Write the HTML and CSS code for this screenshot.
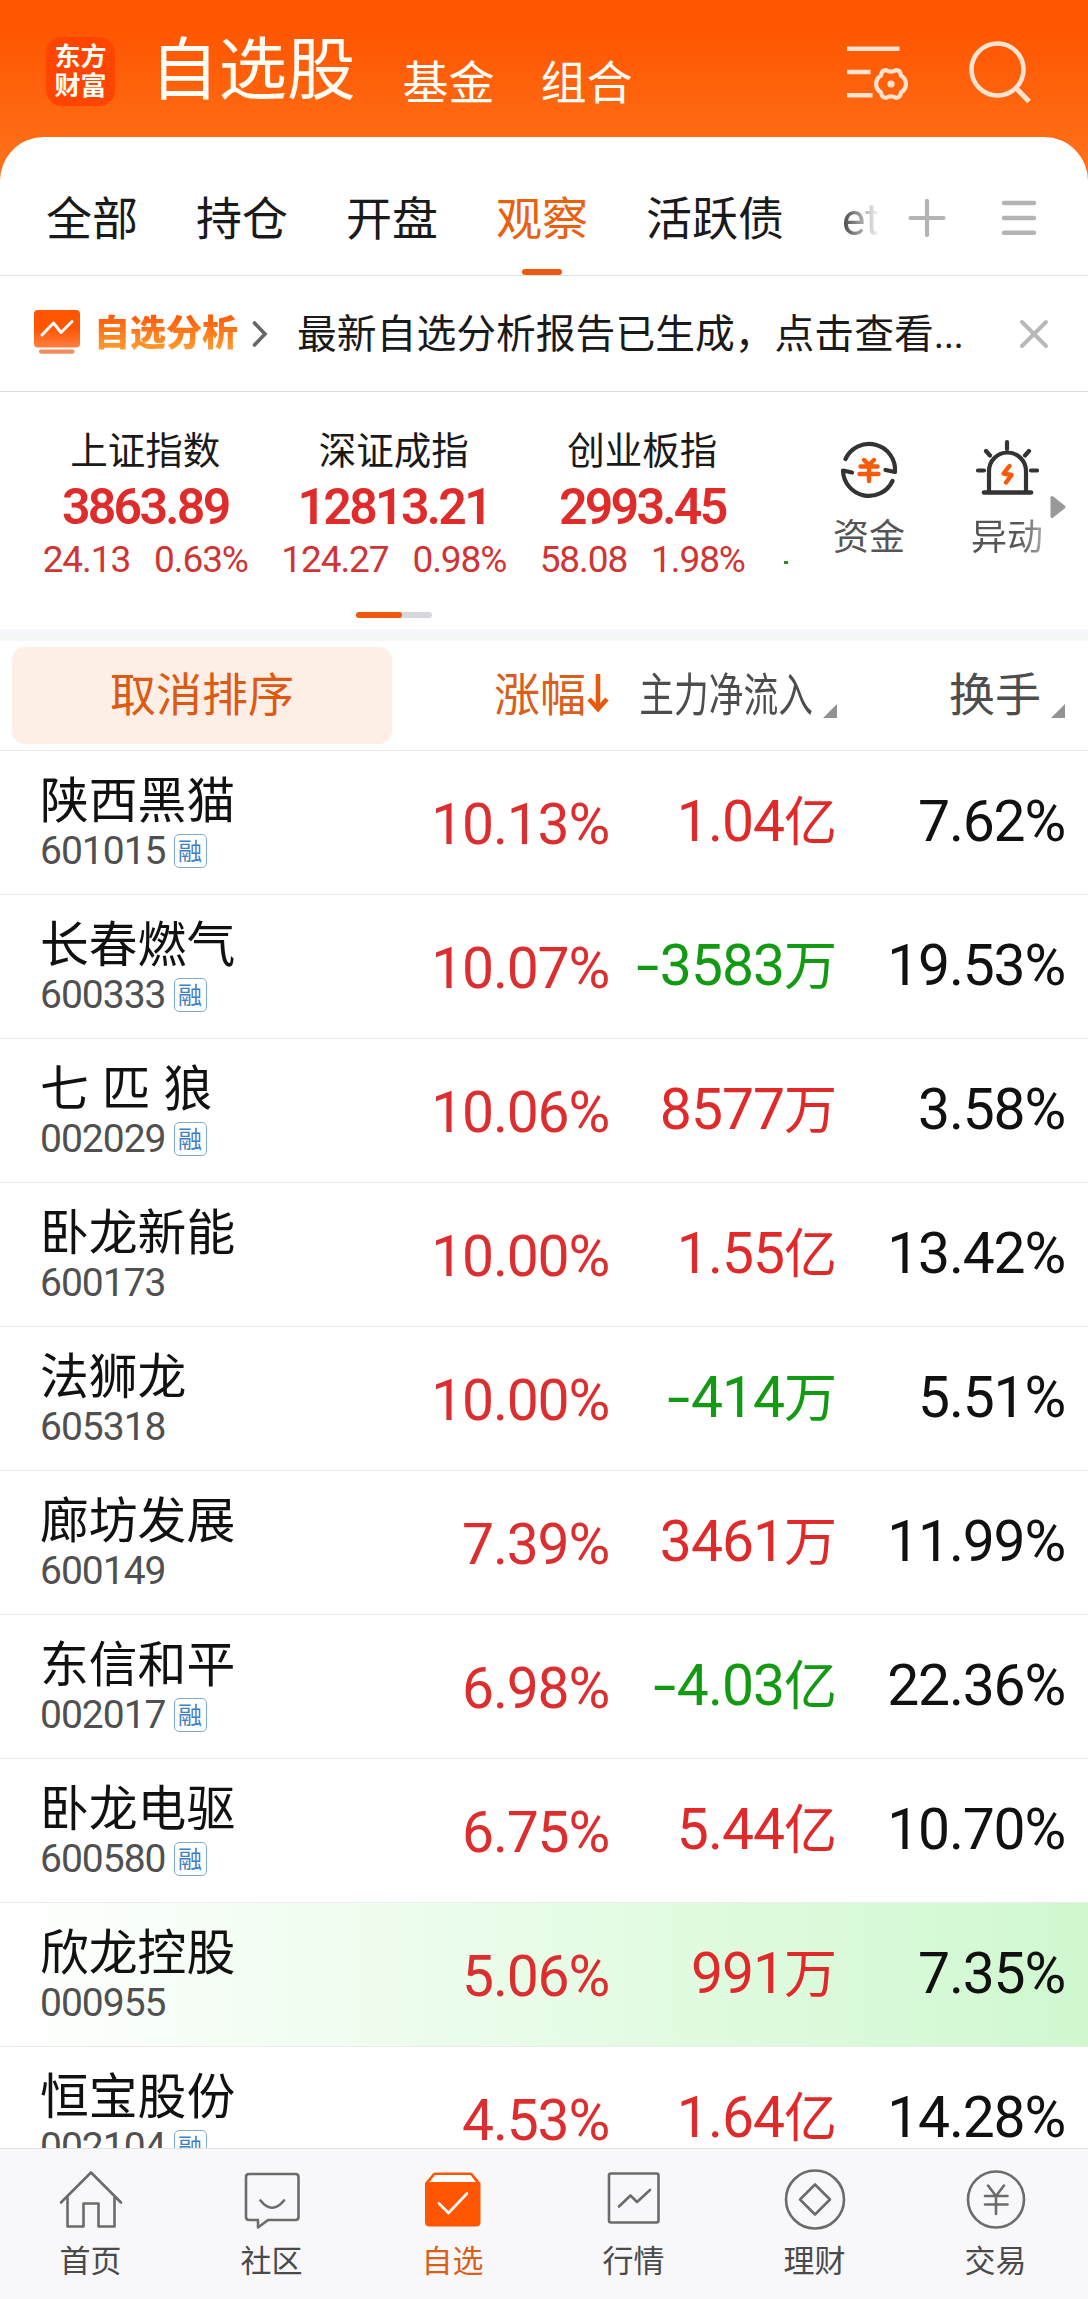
FILE: index.html
```html
<!DOCTYPE html>
<html lang="zh-CN">

<head>
    <meta charset="UTF-8">
    <meta name="viewport" content="width=device-width, initial-scale=1.0">
    <title>自选股</title>
    <link rel="stylesheet" href="styles.css">
</head>

<body>
    <div class="app">
        <!-- 顶部 -->
        <header class="header">
            <div class="logo"><span>东方</span><span>财富</span></div>
            <h1>自选股</h1>
            <a class="header-link">基金</a>
            <a class="header-link">组合</a>
            <div class="header-icons">
                <svg class="icon-filter" width="64" height="64" viewBox="0 0 64 64" fill="none" stroke="#ffe3d1" stroke-width="4.6">
                    <path d="M0 10.7h52.5M0 34h23.5M0 57.3h25.5" />
                    <path d="M39.2 32.2Q44 35 48.8 32.2Q53.4 32 54 37.6Q58.5 40 59 46Q58.5 52 54 54.4Q53.4 60 48.8 59.8Q44 57 39.2 59.8Q34.6 60 34 54.4Q29.5 52 29 46Q29.5 40 34 37.6Q34.6 32 39.2 32.2Z" stroke-width="4.2" stroke-linejoin="round" />
                    <circle cx="44" cy="46" r="3.6" fill="#ffe3d1" stroke="none" />
                </svg>
                <svg class="icon-search" width="64" height="64" viewBox="0 0 64 64" fill="none" stroke="#ffe3d1" stroke-width="4.6">
                    <circle cx="28.5" cy="28.5" r="26" />
                    <path d="M47 47L60 60.5" stroke-width="5" />
                </svg>
            </div>
        </header>

        <main class="panel">
            <!-- 分组 -->
            <nav class="tabs">
                <div class="tab-list">
                    <a>全部</a>
                    <a>持仓</a>
                    <a>开盘</a>
                    <a class="active">观察</a>
                    <a>活跃债</a>
                    <a class="faded">et</a>
                </div>
                <svg class="icon-plus" width="38" height="38" viewBox="0 0 38 38" stroke="#b3b3b3" stroke-width="4.2" stroke-linecap="round">
                    <path d="M2.5 19h33M19 2v34" />
                </svg>
                <svg class="icon-menu" width="36" height="38" viewBox="0 0 36 38" stroke="#b3b3b3" stroke-width="4.4" stroke-linecap="round">
                    <path d="M3 4h30M3 19h30M3 33.7h30" />
                </svg>
            </nav>

            <!-- 分析提示 -->
            <div class="notice">
                <svg class="notice-icon" width="46" height="44" viewBox="0 0 46 44">
                    <defs>
                        <linearGradient id="noticeBg" x1="0" y1="0" x2="0" y2="1">
                            <stop offset=".5" stop-color="#ff5500" />
                            <stop offset="1" stop-color="#ff7f45" />
                        </linearGradient>
                    </defs>
                    <rect width="46" height="37.5" rx="4" fill="url(#noticeBg)" />
                    <rect x="5" y="39.5" width="35.5" height="4.2" rx="2.1" fill="#f48b5c" />
                    <path d="M8 25L19.5 13L27 22.5L38 11.5" fill="none" stroke="#fff" stroke-width="3" stroke-linecap="round" stroke-linejoin="round" />
                </svg>
                <strong>自选分析</strong>
                <svg class="notice-arrow" width="16" height="28" viewBox="0 0 16 28" fill="none" stroke="#666" stroke-width="3.6" stroke-linecap="round">
                    <path d="M2.5 3L13 14L2.5 25" />
                </svg>
                <p>最新自选分析报告已生成，点击查看<span class="dots">...</span></p>
                <svg class="notice-close" width="30" height="30" viewBox="0 0 30 30" stroke="#b8b8b8" stroke-width="4" stroke-linecap="round">
                    <path d="M3 3L27 27M27 3L3 27" />
                </svg>
            </div>

            <!-- 指数 -->
            <section class="market">
                <div class="indexes">
                    <div class="index">
                        <h3>上证指数</h3>
                        <b>3863.89</b>
                        <p><span>24.13</span><span>0.63%</span></p>
                    </div>
                    <div class="index">
                        <h3>深证成指</h3>
                        <b>12813.21</b>
                        <p><span>124.27</span><span>0.98%</span></p>
                    </div>
                    <div class="index">
                        <h3>创业板指</h3>
                        <b>2993.45</b>
                        <p><span>58.08</span><span>1.98%</span></p>
                    </div>
                    <i class="next-index"></i>
                </div>
                <div class="tools">
                    <div class="tool">
                        <svg width="64" height="60" viewBox="0 0 64 60" fill="none" stroke="#333" stroke-width="4.2" stroke-linecap="round" stroke-linejoin="round">
                            <path d="M8.5 20A26 26 0 0 1 58 33L48.5 31" />
                            <path d="M55.5 42A26 26 0 0 1 6 31.5L15 33.5" />
                            <path d="M27 21L32 26L37 21M23.5 27.5h17M22.5 35h19M32 27v15" stroke="#f85a0a" stroke-width="4.4" />
                        </svg>
                        <span>资金</span>
                    </div>
                    <div class="tool">
                        <svg width="64" height="60" viewBox="0 0 64 60" fill="none" stroke="#333" stroke-width="4.2" stroke-linecap="round">
                            <path d="M14 53V32A18.5 18.5 0 0 1 51 32V53" />
                            <path d="M9 53.5h47" stroke-width="4.6" />
                            <path d="M32 3v7M11 12l4 4.5M54 12l-4 4.5M3 31.5h6M56 31.5h6" />
                            <path d="M34.5 27L28.5 34.5L36.5 36L31 43.5" stroke="#f85a0a" stroke-width="4.4" stroke-linejoin="round" />
                        </svg>
                        <span class="cut">异动</span>
                    </div>
                    <svg class="tools-more" width="16" height="24" viewBox="0 0 16 24">
                        <path d="M2 2.5L14 12L2 21.5Z" fill="#999" stroke="#999" stroke-width="3" stroke-linejoin="round" />
                    </svg>
                </div>
                <div class="pager"><i></i></div>
            </section>

            <!-- 表头 -->
            <div class="sort-bar">
                <button>取消排序</button>
                <div class="col sorted">涨幅<svg width="22" height="40" viewBox="0 0 22 40" fill="none" stroke="#e9590c" stroke-width="4.6"><path d="M11 1V35" /><path d="M2 26L11 36L20 26" /></svg></div>
                <div class="col"><span class="narrow">主力净流入</span><i class="corner"></i></div>
                <div class="col">换手<i class="corner"></i></div>
            </div>

            <!-- 股票列表 -->
            <ul class="stocks">
                <li>
                    <div class="stock"><h2>陕西黑猫</h2><p>601015<em>融</em></p></div>
                    <span class="change">10.13%</span><span class="flow up">1.04<small>亿</small></span><span class="turnover">7.62%</span>
                </li>
                <li>
                    <div class="stock"><h2>长春燃气</h2><p>600333<em>融</em></p></div>
                    <span class="change">10.07%</span><span class="flow down"><i>-</i>3583<small>万</small></span><span class="turnover">19.53%</span>
                </li>
                <li>
                    <div class="stock"><h2>七 匹 狼</h2><p>002029<em>融</em></p></div>
                    <span class="change">10.06%</span><span class="flow up">8577<small>万</small></span><span class="turnover">3.58%</span>
                </li>
                <li>
                    <div class="stock"><h2>卧龙新能</h2><p>600173</p></div>
                    <span class="change">10.00%</span><span class="flow up">1.55<small>亿</small></span><span class="turnover">13.42%</span>
                </li>
                <li>
                    <div class="stock"><h2>法狮龙</h2><p>605318</p></div>
                    <span class="change">10.00%</span><span class="flow down"><i>-</i>414<small>万</small></span><span class="turnover">5.51%</span>
                </li>
                <li>
                    <div class="stock"><h2>廊坊发展</h2><p>600149</p></div>
                    <span class="change">7.39%</span><span class="flow up">3461<small>万</small></span><span class="turnover">11.99%</span>
                </li>
                <li>
                    <div class="stock"><h2>东信和平</h2><p>002017<em>融</em></p></div>
                    <span class="change">6.98%</span><span class="flow down"><i>-</i>4.03<small>亿</small></span><span class="turnover">22.36%</span>
                </li>
                <li>
                    <div class="stock"><h2>卧龙电驱</h2><p>600580<em>融</em></p></div>
                    <span class="change">6.75%</span><span class="flow up">5.44<small>亿</small></span><span class="turnover">10.70%</span>
                </li>
                <li class="flash">
                    <div class="stock"><h2>欣龙控股</h2><p>000955</p></div>
                    <span class="change">5.06%</span><span class="flow up">991<small>万</small></span><span class="turnover">7.35%</span>
                </li>
                <li>
                    <div class="stock"><h2>恒宝股份</h2><p>002104<em>融</em></p></div>
                    <span class="change">4.53%</span><span class="flow up">1.64<small>亿</small></span><span class="turnover">14.28%</span>
                </li>
            </ul>
        </main>

        <!-- 底部导航 -->
        <nav class="bottom-nav">
            <a>
                <svg width="64" height="64" viewBox="0 0 64 64"><path d="M2 33.5L32 3.5L62 33.5M8.5 28V57.5H24.5V34.5H39.5V57.5H55.5V28" /></svg>
                首页
            </a>
            <a>
                <svg width="64" height="64" viewBox="0 0 64 64"><path d="M9 5H55.5Q58.5 5 58.5 8V48Q58.5 51 55.5 51H28L18 58.5V51H9Q6 51 6 48V8Q6 5 9 5ZM20.5 31.5Q32 46 44 31.5" /></svg>
                社区
            </a>
            <a class="active">
                <svg width="64" height="64" viewBox="0 0 64 64">
                    <path d="M4 14L12 4.5Q13 3.5 14.5 3.5H49Q50.5 3.5 51.5 4.5L59.5 14V53Q59.5 57.5 55 57.5H8.5Q4 57.5 4 53Z" fill="#ff5500" stroke="none" />
                    <path d="M8.5 13L14 6H49.5L55 13Z" fill="#fff" stroke="none" />
                    <path d="M18 34.5L27.5 44L46 24.5" stroke="#fff" stroke-width="2.6" />
                </svg>
                自选
            </a>
            <a>
                <svg width="64" height="64" viewBox="0 0 64 64"><rect x="7" y="4.5" width="49.5" height="49" rx="2" /><path d="M17 37.5L28.5 26.5L35 33L48 21" /></svg>
                行情
            </a>
            <a>
                <svg width="64" height="64" viewBox="0 0 64 64"><circle cx="32" cy="30.5" r="29" /><path d="M32 15.5L47 30.5L32 45.5L17 30.5Z" /></svg>
                理财
            </a>
            <a>
                <svg width="64" height="64" viewBox="0 0 64 64"><circle cx="32" cy="30.5" r="28" /><path d="M24 16.5L32 27L40 16.5M21 27H43.5M21 35.5H43.5M32 27V45" /></svg>
                交易
            </a>
        </nav>
    </div>
</body>

</html>
```
FILE: styles.css
```css
* {
    box-sizing: border-box;
    margin: 0;
    padding: 0;
}

body {
    font-family: "Noto Sans CJK SC", sans-serif;
    background-color: #fff;
    color: #1a1a1a;
}

svg {
    display: block;
    flex: none;
}

.app {
    display: flex;
    flex-direction: column;
    width: 1088px;
    height: 2299px;
    overflow: hidden;
    background: linear-gradient(#ff5500 24px, #ff7019 160px);
}

/* 顶部 */
.header {
    display: flex;
    flex: none;
    height: 137px;
    padding-left: 46px;
    color: #fffdf5;
}

.logo {
    display: flex;
    flex-direction: column;
    justify-content: center;
    align-items: center;
    width: 69px;
    height: 69px;
    margin-top: 37px;
    padding-bottom: 5px;
    border-radius: 16px;
    background-color: #ff4500;
    font-size: 26px;
    font-weight: 700;
    line-height: 29px;
}

.header h1 {
    margin: 21px 0 0 35px;
    font-size: 68.5px;
    font-weight: 400;
    line-height: 88px;
}

.header-link {
    margin: 49px 0 0 47px;
    font-size: 46px;
    line-height: 60px;
}

.header-link + .header-link {
    margin-left: 46px;
}

.header-icons {
    display: flex;
    margin: 38px 55px 0 auto;
    gap: 58px;
}

.header-icons .icon-search {
    margin-top: 3px;
}

/* 分组 */
.panel {
    flex: 1;
    min-height: 0;
    overflow: hidden;
    border-radius: 44px 44px 0 0;
    background-color: #fff;
}

.tabs {
    display: flex;
    align-items: flex-start;
    height: 139px;
    border-bottom: 1px solid #e2e2e2;
}

.tab-list {
    display: flex;
    width: 886px;
    height: 139px;
    padding-left: 46px;
    gap: 58px;
    overflow: hidden;
    white-space: nowrap;
}

.tab-list a {
    flex: none;
    display: flex;
    flex-direction: column;
    align-items: center;
    padding-top: 46px;
    font-size: 46px;
    line-height: 64px;
}

.tab-list .active {
    color: #e9600f;
}

.tab-list .active::after {
    content: "";
    width: 40px;
    height: 6px;
    margin-top: 22px;
    border-radius: 3px;
    background-color: #f0580f;
}

.tab-list .faded {
    padding-top: 51px;
    font-family: Roboto, sans-serif;
    font-size: 44px;
    background: linear-gradient(90deg, #444, #fff 38px);
    -webkit-background-clip: text;
    background-clip: text;
    color: transparent;
}

.icon-plus {
    margin: 62px 0 0 22px;
}

.icon-menu {
    margin: 62px 0 0 55px;
}

/* 分析提示 */
.notice {
    display: flex;
    align-items: center;
    height: 116px;
    padding-left: 34px;
    border-bottom: 1px solid #dedede;
}

.notice strong {
    margin: 0 14px 7px 14px;
    font-size: 36px;
    font-weight: 900;
    line-height: 50px;
    background: linear-gradient(#ff5a0a 10px, #ff9a2e 44px);
    -webkit-background-clip: text;
    background-clip: text;
    color: transparent;
}

.notice-icon {
    margin-bottom: 4px;
}

.notice p {
    margin: 0 0 2px 29px;
    font-size: 39.8px;
    line-height: 56px;
    white-space: nowrap;
}

.notice .dots {
    font-family: Roboto, sans-serif;
    letter-spacing: -0.6px;
}

.notice-close {
    margin-left: auto;
    margin-right: 39px;
}

/* 指数 */
.market {
    position: relative;
    display: flex;
    height: 249px;
    border-bottom: 12px solid #f6f7fa;
}

.indexes {
    position: relative;
    display: flex;
    width: 790px;
    padding-left: 21px;
}

.index {
    width: 248.5px;
    padding-top: 30px;
    text-align: center;
    white-space: nowrap;
}

.index h3 {
    font-size: 37.5px;
    font-weight: 400;
    line-height: 52px;
}

.index b {
    display: block;
    margin-top: 3px;
    font-family: Roboto, sans-serif;
    font-size: 50px;
    font-weight: 600;
    line-height: 60px;
    letter-spacing: -2.7px;
    color: #e02b2b;
}

.index p {
    display: flex;
    justify-content: center;
    gap: 24px;
    font-family: Roboto, sans-serif;
    font-size: 37px;
    line-height: 46px;
    letter-spacing: -1.1px;
    color: #cf3535;
}

.next-index {
    position: absolute;
    left: 784px;
    bottom: 65px;
    width: 4px;
    height: 3px;
    background-color: #2c8c2c;
}

.tools {
    display: flex;
}

.tool {
    display: flex;
    flex-direction: column;
    align-items: center;
    width: 138px;
    padding-top: 47px;
    font-size: 36px;
    line-height: 52px;
    color: #555;
}

.tool:first-child {
    margin-left: 10px;
}

.tool span {
    margin-top: 9px;
}

.tool .cut {
    background: linear-gradient(90deg, #555 48px, #aaa 72px);
    -webkit-background-clip: text;
    background-clip: text;
    color: transparent;
}

.tools-more {
    position: absolute;
    left: 1050px;
    top: 103px;
}

.pager {
    position: absolute;
    left: 356px;
    bottom: 11px;
    width: 76px;
    height: 6px;
    border-radius: 3px;
    background-color: #d5d7dc;
}

.pager i {
    display: block;
    width: 46px;
    height: 6px;
    border-radius: 3px;
    background-color: #f0580f;
}

/* 表头 */
.sort-bar,
.stocks li {
    display: grid;
    grid-template-columns: 380px 229px 228px 228px;
}

.sort-bar {
    height: 110px;
    border-bottom: 1px solid #e8e8e8;
    font-size: 46px;
    line-height: 64px;
    color: #4d4d4d;
}

.sort-bar button {
    width: 380px;
    height: 97px;
    margin: 6px 0 0 12px;
    padding-bottom: 9px;
    border: none;
    border-radius: 13px;
    background-color: #fdeee6;
    color: #dc5a12;
    font-family: inherit;
    font-size: 46px;
}

.sort-bar .col {
    display: flex;
    justify-content: flex-end;
    padding-top: 18px;
    white-space: nowrap;
}

.sort-bar .sorted {
    color: #d9601c;
}

.sorted svg {
    margin: 14px 0 0 1px;
}

.narrow {
    flex: none;
    width: 230px;
    transform: scaleX(0.755);
    transform-origin: right;
}

.corner {
    flex: none;
    width: 14px;
    height: 14px;
    margin: 45px 0 0 10px;
    background-color: #919196;
    clip-path: polygon(100% 0, 100% 100%, 0 100%);
}

/* 股票列表 */
.stocks {
    list-style-type: none;
}

.stocks li {
    height: 144px;
    border-bottom: 1px solid #ececec;
    font-family: Roboto, "Noto Sans CJK SC", sans-serif;
    font-size: 57px;
    letter-spacing: -1.2px;
    line-height: 70px;
    text-align: right;
    color: #111;
    white-space: nowrap;
}

.stocks .flash {
    background: linear-gradient(90deg, #fff, #e7fce7 50%, #cff8cf);
}

.stock {
    padding: 15px 0 0 40px;
    text-align: left;
}

.stock h2 {
    font-family: "Noto Sans CJK SC", sans-serif;
    font-size: 48.8px;
    font-weight: 400;
    line-height: 62px;
    letter-spacing: 0;
    word-spacing: 2px;
}

.stock p {
    display: flex;
    font-size: 39px;
    line-height: 46px;
    letter-spacing: -1px;
    color: #505050;
}

.stock em {
    width: 33px;
    height: 34px;
    margin: 6px 0 0 8px;
    border: 1.5px solid #7fabd0;
    border-radius: 5px;
    font-family: "Noto Sans CJK SC", sans-serif;
    font-size: 24px;
    font-style: normal;
    line-height: 29px;
    letter-spacing: 0;
    text-align: center;
    color: #3d80c8;
}

.change {
    padding-top: 39px;
    color: #dc2e2e;
}

.flow,
.turnover {
    padding-top: 36px;
}

.flow {
    padding-right: 1px;
    letter-spacing: -1px;
}

.flow small {
    font-size: 53px;
}

/* 负号拉宽 */
.flow i {
    display: inline-block;
    width: 26px;
    font-style: normal;
    text-align: center;
    transform: scaleX(1.45);
}

.flow.up {
    color: #e02a2a;
}

.flow.down {
    color: #129a12;
}

/* 底部导航 */
.bottom-nav {
    display: flex;
    flex: none;
    height: 151px;
    padding-right: 2px;
    border-top: 1px solid #e2e2e5;
    background-color: #f8f8fa;
}

.bottom-nav a {
    flex: 1;
    display: flex;
    flex-direction: column;
    align-items: center;
    padding-top: 20px;
    font-size: 31px;
    line-height: 42px;
    color: #4a4a4a;
}

.bottom-nav svg {
    margin-bottom: 5px;
    fill: none;
    stroke: #6b6b6b;
    stroke-width: 2.6;
    stroke-linecap: round;
    stroke-linejoin: round;
}

.bottom-nav .active {
    color: #d85f1a;
}
```
